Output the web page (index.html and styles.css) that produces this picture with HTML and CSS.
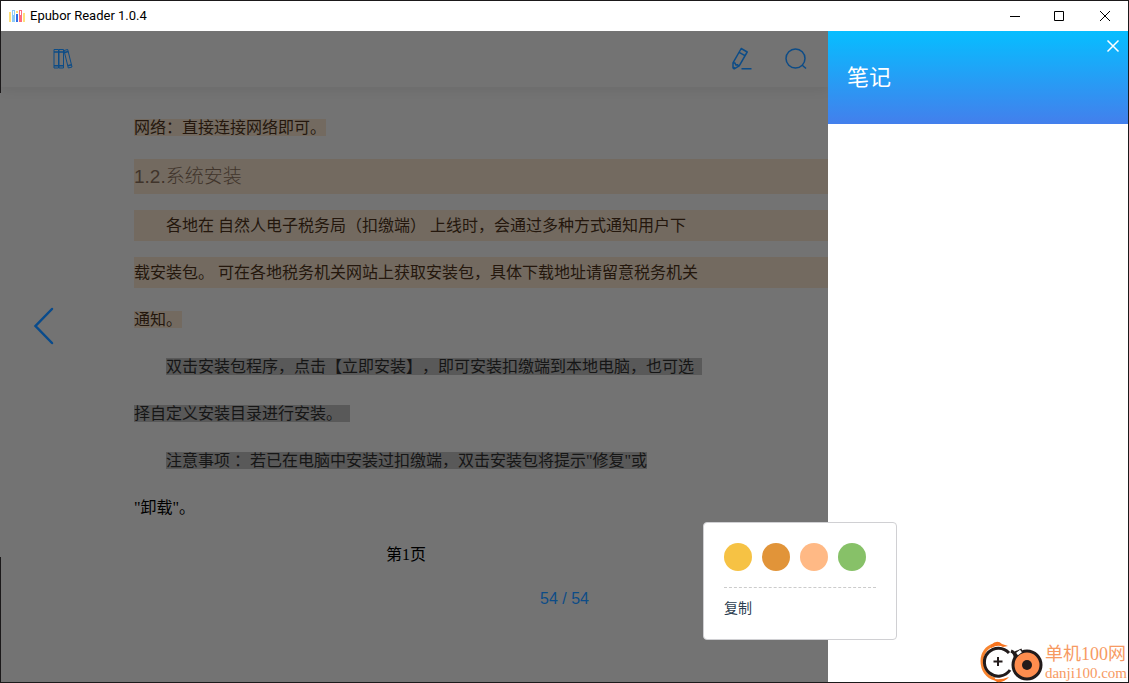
FILE: index.html
```html
<!DOCTYPE html>
<html lang="zh-CN">
<head>
<meta charset="utf-8">
<title>Epubor Reader 1.0.4</title>
<link rel="stylesheet" href="styles.css">
</head>
<body>
<div class="window">
  <header class="titlebar">
    <svg class="app-icon" width="16" height="12" viewBox="0 0 16 12" aria-hidden="true">
      <path fill="#ffe07a" d="M0 2h2v10H0zM14 3h2v9h-2z"/>
      <path fill="#8ecbfa" d="M3 0h3v12H3z"/>
      <path fill="#2f6fe4" d="M7 4h2v8H7z"/>
      <path fill="#ffe07a" d="M7 1h2v2H7z"/>
      <path fill="#ff6b7d" d="M10 0h3v12h-3z"/>
      <path fill="#fff" d="M4 1h1v4H4zM11 1h1v4h-1z"/>
    </svg>
    <span class="app-name">Epubor Reader 1.0.4</span>
    <div class="window-buttons">
      <button type="button" aria-label="最小化"><svg width="12" height="12" viewBox="0 0 12 12"><path d="M1 6.500h10" /></svg></button>
      <button type="button" aria-label="最大化"><svg width="12" height="12" viewBox="0 0 12 12"><path d="M.500 1.500h9v9h-9z"/></svg></button>
      <button type="button" aria-label="关闭"><svg width="12" height="12" viewBox="0 0 12 12"><path d="M1 1l10 10M11 1L1 11"/></svg></button>
    </div>
  </header>
  <div class="content">
    <main class="reader">
      <nav class="toolbar">
        <button type="button" class="tool" aria-label="书架">
          <svg width="22" height="24" viewBox="0 0 22 24">
            <path d="M2 2.500h4.500v18.500H2zM7 2.500h4.500v18.500H7zM12 3.500l3.700-1 4.300 17.500-3.700 1z"/>
            <path d="M2 5h9.500M2 18.700h9.500M12.500 5.500l3.700-1M15.800 18.700l3.700-1" stroke-width="1.500"/>
          </svg>
        </button>
        <div class="tool-group">
          <button type="button" class="tool" aria-label="笔记">
            <svg width="24" height="24" viewBox="0 0 24 24">
              <path d="M11.200 1.500l6 3.500-8 13.800-5 3-1.200-1v-5zM9.200 5.300l5.700 3.400M3 15.800l2 .2.800 2 2-.2 1 1.500M3.200 20l1.700 1.200M11.500 21.800H21.500" stroke-width="1.500" stroke-linejoin="round"/>
            </svg>
          </button>
          <button type="button" class="tool" aria-label="搜索">
            <svg width="24" height="24" viewBox="0 0 24 24"><circle cx="11.500" cy="11.500" r="9.500" stroke-width="1.500"/><path d="M18 18l4 3.500" stroke-width="1.500"/></svg>
          </button>
        </div>
      </nav>
      <div class="book">
        <button type="button" class="previous" aria-label="上一页">
          <svg width="22" height="38" viewBox="0 0 22 38"><path d="M19 2L2.500 19 19 36" stroke-width="2.500" stroke-linecap="round"/></svg>
        </button>
        <article class="page">
          <p><mark>网络：直接连接网络即可。</mark></p>
          <h3 class="marked">1.2.系统安装</h3>
          <p class="marked indent">各地在 自然人电子税务局（扣缴端） 上线时，会通过多种方式通知用户下</p>
          <p class="marked">载安装包。 可在各地税务机关网站上获取安装包，具体下载地址请留意税务机关</p>
          <p><mark>通知。</mark></p>
          <p class="indent"><span class="selected line-end">双击安装包程序，点击【立即安装】，即可安装扣缴端到本地电脑，也可选</span></p>
          <p><span class="selected line-end">择自定义安装目录进行安装。</span></p>
          <p class="indent"><span class="selected">注意事项 ：若已在电脑中安装过扣缴端，双击安装包将提示"修复"或</span></p>
          <p>"卸载"。</p>
          <p class="page-name">第1页</p>
        </article>
      </div>
      <footer class="progress">54 / 54</footer>
    </main>
    <aside class="notes">
      <header class="notes-header">
        <h2>笔记</h2>
        <button type="button" class="notes-close" aria-label="关闭笔记"><svg width="14" height="14" viewBox="0 0 14 14"><path d="M1.500 1.500l11 11M12.500 1.500l-11 11"/></svg></button>
      </header>
    </aside>
  </div>
  <div class="popup">
    <div class="swatches">
      <button type="button" class="swatch yellow" aria-label="黄色"></button>
      <button type="button" class="swatch orange" aria-label="橙色"></button>
      <button type="button" class="swatch peach" aria-label="桃色"></button>
      <button type="button" class="swatch green" aria-label="绿色"></button>
    </div>
    <button type="button" class="copy">复制</button>
  </div>
  <div class="watermark">
    <svg width="66" height="42" viewBox="0 0 66 42" aria-hidden="true">
      <g fill="none">
        <path d="M15 4C7 6 3 13 3 20c0 9 5 16 13 18" stroke="#f8842f" stroke-width="3"/>
        <path d="M12 4Q18-2 23 3l6 2-5 1q-5-3-12 1zM12 37q8 3 18-1-5 6-12 5z" fill="#f8741f"/>
        <path d="M30 12A14 14 0 1 0 31 29" stroke="#221b1b" stroke-width="3"/>
        <path d="M32 10q5 2 4 9M36 12l7-3" stroke="#221b1b" stroke-width="3"/>
        <path d="M19 16v9M14.500 20.500h9" stroke="#221b1b" stroke-width="2"/>
        <circle cx="48" cy="24" r="14" fill="#ff8d4e" stroke="#221b1b" stroke-width="3"/>
        <path d="M38 13l4-3" stroke="#fff" stroke-width="3"/>
      </g>
      <circle cx="48" cy="24" r="5" fill="#221b1b"/>
    </svg>
    <div class="watermark-text"><span>单机100网</span><span class="domain">danji100.com</span></div>
  </div>
</div>
</body>
</html>
```
FILE: styles.css
```css
* { box-sizing: border-box; }

body {
  margin: 0;
  font-family: "Liberation Sans", "Noto Sans CJK SC", sans-serif;
  font-size: 16px;
  text-spacing-trim: space-all;
}

button {
  display: flex;
  align-items: center;
  justify-content: center;
  margin: 0;
  padding: 0;
  border: 0;
  background: none;
  font: inherit;
  color: inherit;
}

svg { display: block; flex: none; }
button svg { fill: none; stroke: currentColor; }

.window {
  position: relative;
  display: flex;
  flex-direction: column;
  min-height: 100vh;
  padding: 1px;
  background: linear-gradient(#1b191a 93px, #737373 93px, #737373 557px, #1b191a 557px) left / 1px 100% no-repeat #1b191a;
}

.titlebar {
  display: flex;
  align-items: center;
  height: 30px;
  padding-left: 8px;
  background: #fff;
  color: #000;
}
.app-name {
  margin-left: 5px;
  font-family: Roboto, sans-serif;
  font-size: 13px;
  line-height: 30px;
}
.window-buttons { display: flex; margin-left: auto; padding-right: 1px; }
.window-buttons button { width: 45px; height: 28px; }

.content { display: flex; flex: 1; }
.reader {
  display: flex;
  flex: 1;
  flex-direction: column;
  min-width: 0;
  overflow: hidden;
  background: #737373;
}

.toolbar {
  display: flex;
  align-items: center;
  justify-content: space-between;
  height: 56px;
  padding: 0 20px 0 50px;
  box-shadow: 0 2px 12px rgba(0, 0, 0, 0.08);
  color: #0d4c87;
}
.tool-group { display: flex; gap: 30px; }
.tool { min-width: 24px; height: 24px; }

.book { display: flex; align-items: center; padding-top: 25px; }
.previous {
  flex: none;
  width: 86px;
  height: 38px;
  margin-bottom: 30px;
  color: #094b8c;
}
.page {
  flex: 1;
  min-width: 0;
  margin-left: 47px;
  font-family: "Liberation Serif", "Noto Sans CJK SC", serif;
  line-height: 31px;
  white-space: nowrap;
  color: #000;
}
.page p { margin: 0 0 16px; }
.page h3 {
  margin: 0 0 16px;
  font-family: "Liberation Sans", "Noto Sans CJK SC", sans-serif;
  font-size: 19px;
  font-weight: 300;
  line-height: 35px;
  color: #40342b;
}
.page .indent { text-indent: 32px; }
.page .marked { background: #736a60; }
.page p.marked { color: #24170d; }
mark { background: #736a60; color: #24170d; }
.selected { background: #595959; color: #161616; }
.line-end { padding-right: 8px; }
.page .page-name { margin: 0; padding-left: 252px; }

.progress {
  padding: 17px 0 15px 539px;
  font-size: 16px;
  line-height: 24px;
  color: #0d4c87;
}

.notes { flex: none; width: 300px; background: #fff; }
.notes-header {
  display: flex;
  align-items: flex-start;
  justify-content: space-between;
  height: 93px;
  padding: 8px 8px 0 19px;
  background: linear-gradient(#06beff, #437fec);
  color: #fff;
}
.notes-header h2 {
  margin: 0;
  padding-top: 23px;
  font-size: 22px;
  font-weight: 400;
  line-height: 32px;
}
.notes-close { width: 14px; height: 14px; }
.notes-close svg { stroke-width: 1.500; }

/* Highlight menu floating over the page and the notes panel */
.popup {
  position: absolute;
  top: 522px;
  right: 232px;
  width: 194px;
  padding: 20px;
  border: 1px solid #d0d0d3;
  border-radius: 4px;
  background: #fff;
}
.swatches {
  display: flex;
  gap: 10px;
  padding-bottom: 16px;
  border-bottom: 1px dashed #ccc;
}
.swatch { width: 28px; height: 28px; border-radius: 50%; }
.yellow { background: #f6c244; }
.orange { background: #e19439; }
.peach { background: #ffb985; }
.green { background: #87c168; }
.copy {
  margin-top: 10px;
  font-size: 14px;
  line-height: 21px;
  color: #2c3e50;
}

.watermark {
  position: absolute;
  right: 2px;
  bottom: 0;
  display: flex;
  align-items: flex-end;
}
.watermark-text {
  display: flex;
  flex-direction: column;
  padding-bottom: 1px;
  font-family: "Liberation Serif", "Noto Sans CJK SC", serif;
  font-size: 18px;
  line-height: 20px;
  white-space: nowrap;
  color: #f79a63;
}
.domain { font-size: 15px; line-height: 18px; }
```
